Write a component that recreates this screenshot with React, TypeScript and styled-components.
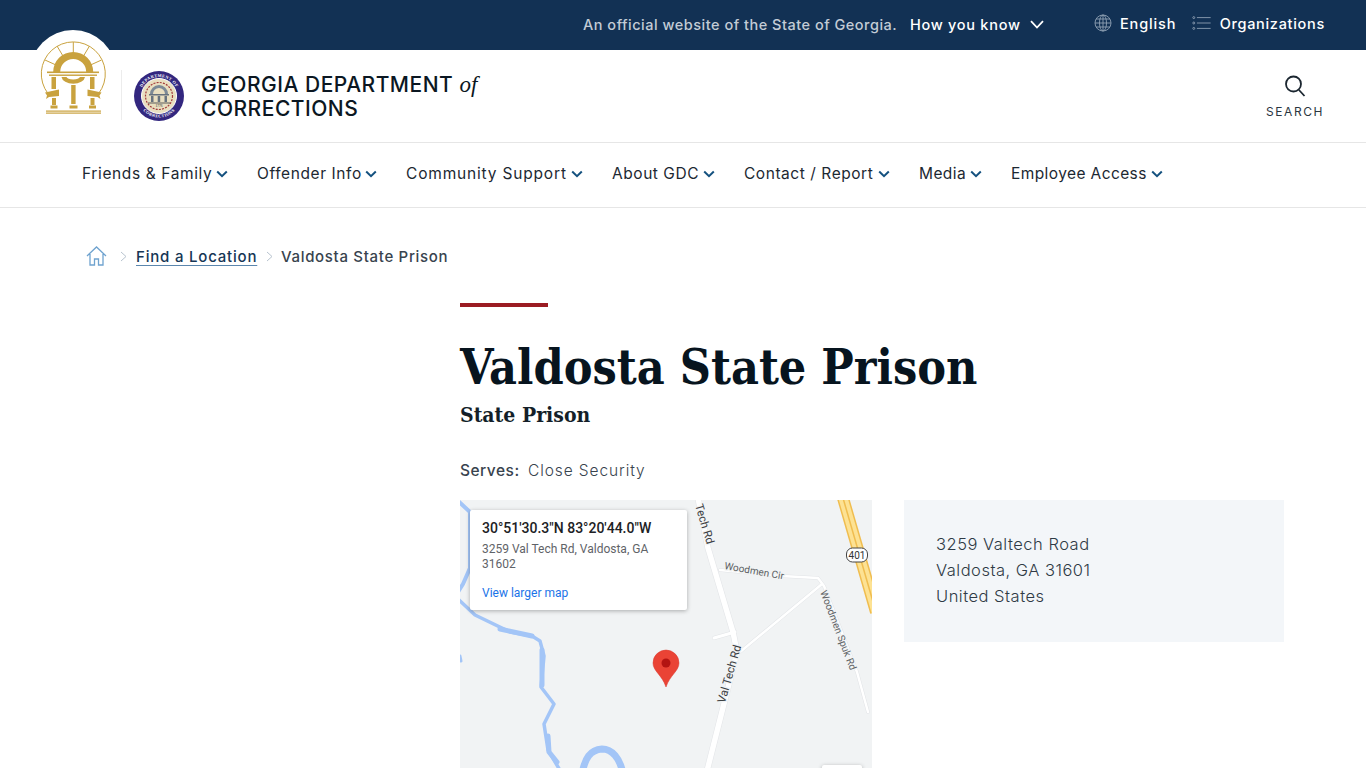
import React from "react";
import styled, { createGlobalStyle } from "styled-components";

const Global = createGlobalStyle`
  html, body { margin: 0; padding: 0; height: 768px; overflow: hidden; background: #fff; }
  body { font-family: Inter, "Open Sans", "Liberation Sans", sans-serif; }
  * { box-sizing: border-box; }
`;

const Page = styled.div`width: 1366px; height: 768px; overflow: hidden; background: #fff;`;

const TopBar = styled.div`
  height: 50px; background: #123154; display: flex; align-items: center; justify-content: flex-end;
  padding: 0 41px 2px 0; font-size: 14.5px; color: #fff;
`;
const Official = styled.span`color: #c3ccd6; font-weight: 500; width: 327px; letter-spacing: .5px; white-space: nowrap;`;
const Know = styled.span`
  display: flex; align-items: center; font-weight: 500; width: 184px; letter-spacing: .72px; gap: 9px;
`;
const TopLink = styled.span<{ $w: number; $ls: number }>`
  display: flex; align-items: center; gap: 8px; font-weight: 500; width: ${p => p.$w}px; letter-spacing: ${p => p.$ls}px;
  position: relative; top: -1px; white-space: nowrap;
`;

const Header = styled.header`
  height: 92px; display: flex; align-items: flex-start; background: #fff; padding: 0 41px 0 30px;
`;
const SealTab = styled.div`
  width: 86px; height: 90px; margin-top: -20px; background: #fff; border-radius: 43px 43px 0 0;
  position: relative; flex: none;
`;
const Divider = styled.div`width: 1px; height: 50px; background: #ececec; margin: 20px 11px 0 5px; flex: none;`;
const DeptSeal = styled.div`margin-top: 20px; width: 52px; height: 52px; flex: none;`;
const Title = styled.div`
  margin: 23px 0 0 16px; font-size: 21px; line-height: 24px; color: #0b1722; font-weight: 500; letter-spacing: .5px; flex: 1;
  white-space: nowrap;
`;
const Of = styled.em`font-family: "Liberation Serif", serif; font-style: italic; font-size: 23px; letter-spacing: 0;`;
const Search = styled.div`
  display: flex; flex-direction: column; align-items: center; width: 60px; margin-top: 25px; gap: 7px;
  font-size: 12px; letter-spacing: 1.6px; color: #2b3640; line-height: 16px;
`;

const Nav = styled.nav`
  height: 66px; border-top: 1px solid #e6e6e6; border-bottom: 1px solid #e6e6e6; display: flex; align-items: center;
  padding: 0 0 3px 82px; gap: 29px;
`;
const NavItem = styled.div`display: flex; align-items: center; gap: 4px;`;
const NavLabel = styled.span<{ $w: number; $ls: number }>`
  width: ${p => p.$w}px; font-size: 15.5px; color: #1c2832; white-space: nowrap; letter-spacing: ${p => p.$ls}px;
`;

const Crumbs = styled.div`
  display: flex; align-items: center; height: 30px; margin: 33px 0 0 86px; font-size: 15px;
`;
const CrumbLink = styled.span`
  color: #163655; font-weight: 500; text-decoration: underline; text-decoration-color: #5b86ad; text-underline-offset: 3px; width: 121px;
  white-space: nowrap; letter-spacing: .8px;
`;
const CrumbText = styled.span`color: #38434e; font-weight: 500; white-space: nowrap; letter-spacing: .68px;`;
const Sep = styled.span<{ $l: number; $r: number }>`
  display: flex; margin: 0 ${p => p.$r}px 0 ${p => p.$l}px;
`;

const Main = styled.main`margin: 0 0 0 460px; width: 824px; padding-top: 32px;`;
const RedBar = styled.div`width: 88px; height: 4px; background: #9b1c23;`;
const H1 = styled.h1`
  margin: 30px 0 0; font: 700 48px/60px "DejaVu Serif Condensed", "DejaVu Serif", serif; color: #07141e; white-space: nowrap;
`;
const H2 = styled.h2`
  margin: 3px 0 0; font: 700 21px/30px "DejaVu Serif Condensed", "DejaVu Serif", serif; color: #141f29;
`;
const Serves = styled.div`margin-top: 29px; font-size: 15.5px; line-height: 24px; color: #38434e; display: flex; letter-spacing: .5px;`;
const ServesLabel = styled.span`font-weight: 500; width: 68px;`;
const ServesValue = styled.span`font-weight: 300; letter-spacing: .9px;`;
const Columns = styled.div`margin-top: 17px; display: flex; gap: 32px; align-items: flex-start;`;
const MapBox = styled.div`width: 412px; height: 300px; position: relative; background: #f1f3f4; flex: none; overflow: hidden; font-family: Roboto, sans-serif;`;
const MapCard = styled.div`
  position: absolute; left: 10px; top: 10px; width: 217px; height: 100px; background: #fff; padding: 9px 12px;
  box-shadow: 0 1px 4px rgba(0,0,0,.3); border-radius: 2px;
`;
const CardTitle = styled.div`font-size: 14px; font-weight: 500; line-height: 19px; color: #202124; white-space: nowrap;`;
const CardAddress = styled.div`font-size: 12px; line-height: 14.5px; color: #5f6368; margin-top: 4px;`;
const CardLink = styled.div`font-size: 12px; line-height: 14px; color: #1a73e8; margin-top: 15px;`;
const ZoomStub = styled.div`
  position: absolute; left: 362px; top: 265px; width: 40px; height: 80px; background: #fff; border-radius: 2px;
  box-shadow: 0 1px 4px rgba(0,0,0,.3);
`;
const AddressBox = styled.address`
  width: 380px; height: 142px; background: #f3f6f9; padding: 31px 32px; font-style: normal; font-size: 16.5px; line-height: 26px;
  font-weight: 300; color: #2f3a45; letter-spacing: .5px;
`;

const Chevron = () => (
  <svg width="12" height="8" viewBox="0 0 12 8" fill="none"><path d="M1.200 1.500 6 6.200l4.800-4.700" stroke="#14517f" strokeWidth="2" /></svg>
);

const navItems: [string, number, number][] = [
  ["Friends & Family", 130, .62], ["Offender Info", 104, .6], ["Community Support", 161, .82], ["About GDC", 87, .55],
  ["Contact / Report", 130, .55], ["Media", 47, .4], ["Employee Access", 136, .4],
];

const GeorgiaSeal = () => (
  <svg width="86" height="90" viewBox="30 30 86 90" style={{ display: "block" }}>
    <g fill="#c9a23e">
      <path d="M48 93.500A32 32 0 1 1 98.600 93.500" fill="none" stroke="#c9a23e" strokeWidth="1" />
      <g stroke="#c9a23e" strokeWidth="1">
        <path d="M45 60 56 65M57 46 63 56M73.300 42 73.300 53M89.500 46 83.500 56M101.500 60 90.500 65" />
      </g>
      <path d="M53.200 72a20 20 0 0 1 40 0h-7a13 13 0 0 0-26 0z" />
      <rect x="47" y="71.500" width="52" height="1.600" />
      <rect x="49" y="74.500" width="48" height="1.400" />
      <path d="M61.500 77h23.500a11.800 7.500 0 0 1-23.500 0zM66.500 77a6.800 3 0 0 0 13.400 0z" fillRule="evenodd" />
      <rect x="51.500" y="77" width="4.500" height="12" />
      <rect x="71.200" y="85" width="4.400" height="19" />
      <rect x="90" y="77" width="4.500" height="12" />
      <path d="M45 92.500 59 89.500 59 96 49 97 46 99 47 95.500z" />
      <path d="M101.500 92.500 87.500 89.500 87.500 96 97.500 97 100.500 99 99.500 95.500z" />
      <rect x="52" y="98" width="4" height="7" />
      <rect x="90.500" y="98" width="4" height="7" />
      <rect x="50.500" y="105.500" width="7" height="3" />
      <rect x="69.500" y="105.500" width="8" height="3" />
      <rect x="89" y="105.500" width="7" height="3" />
      <rect x="46" y="110.500" width="55" height="1.200" />
      <rect x="46" y="112.500" width="55" height="1.200" />
    </g>
  </svg>
);

const DeptSealArt = () => (
  <svg width="52" height="52" viewBox="0 0 52 52" style={{ display: "block" }}>
    <defs>
      <path id="sealTop" d="M7 26a19 19 0 0 1 38 0" />
      <path id="sealBottom" d="M4.500 26a21.500 21.500 0 0 0 43 0" />
    </defs>
    <circle cx="26" cy="26" r="25" fill="#33277f" />
    <circle cx="26" cy="26" r="17.500" fill="#e9dfc0" stroke="#fff" strokeWidth="1" />
    <circle cx="26" cy="26" r="13.500" fill="none" stroke="#a33a3a" strokeWidth="1.200" strokeDasharray="2 1.200" />
    <text fontSize="4.300" fontFamily="Liberation Serif, serif" fill="#fff" fontWeight="700" letterSpacing=".35">
      <textPath href="#sealTop" startOffset="50%" textAnchor="middle">DEPARTMENT OF</textPath>
    </text>
    <text fontSize="4.300" fontFamily="Liberation Serif, serif" fill="#fff" fontWeight="700" letterSpacing=".35">
      <textPath href="#sealBottom" startOffset="50%" textAnchor="middle">CORRECTIONS</textPath>
    </text>
    <path d="M17 24a9 9 0 0 1 18 0h-3a6 6 0 0 0-12 0z" fill="#7d8a96" />
    <path d="M16 24h20v1.500H16zM18 26h2.500v6H18zM24.700 26h2.500v6h-2.500zM31.500 26H34v6h-2.500z" fill="#66727e" />
    <path d="M15 32.500h22v1H15z" fill="#5a5a5a" />
    <text x="26" y="37.400" fontSize="3.500" textAnchor="middle" fontFamily="Liberation Serif, serif" fill="#222">1776</text>
  </svg>
);

const roadCase = "#e2e4e7";

const MapArt = () => (
  <svg width="412" height="300" viewBox="0 0 412 300" style={{ display: "block" }}>
    <g fill="none" strokeLinejoin="round" strokeLinecap="round">
      <path d="M-2 1 10 12 10 68 3 84-2 92" stroke="#a3c5f7" strokeWidth="4" />
      <path d="M-2 99 15 115 50 132 72 136 80 141 84 156 81 187 94 204 84 224 88 250 101 272" stroke="#a3c5f7" strokeWidth="3.500" />
      <path d="M40 129 72 136M82 150 82 185M88 236 89 252 97 262" stroke="#a3c5f7" strokeWidth="5" />
      <path d="M122 274 C125 258 130 250 142 249 C152 249 160 258 163 274" stroke="#a3c5f7" strokeWidth="7" />
      <path d="M0 156 1 161" stroke="#a3c5f7" strokeWidth="3" />
      <path d="M383-2 416 112" stroke="#f0bd4f" strokeWidth="12" strokeLinecap="butt" />
      <path d="M383-2 416 112" stroke="#fde293" strokeWidth="9" strokeLinecap="butt" />
      <path d="M383-2 416 112" stroke="#f0bd4f" strokeWidth="1.500" strokeLinecap="butt" />
      <path d="M362 84 280 152" stroke={roadCase} strokeWidth="3.500" />
      <path d="M260 70 322 76 358 78 364 86 397 172 408 212" stroke={roadCase} strokeWidth="3.500" />
      <path d="M254 138 275 132" stroke={roadCase} strokeWidth="4" />
      <path d="M238-2 248 48 273 132 277 152 246 275" stroke={roadCase} strokeWidth="6.500" strokeLinecap="butt" />
      <path d="M362 84 280 152" stroke="#fff" strokeWidth="2.500" />
      <path d="M260 70 322 76 358 78 364 86 397 172 408 212" stroke="#fff" strokeWidth="2.500" />
      <path d="M254 138 275 132" stroke="#fff" strokeWidth="3" />
      <path d="M238-2 248 48 273 132 277 152 246 275" stroke="#fff" strokeWidth="5.500" strokeLinecap="butt" />
    </g>
    <g fontFamily="Roboto, sans-serif" fontSize="11.500" fill="#5c5f63" stroke="#f1f3f4" strokeWidth="2.500" paintOrder="stroke">
      <text transform="translate(241 25) rotate(73)" textAnchor="middle" fill="#3c4043">Tech Rd</text>
      <text transform="translate(273 175) rotate(-74)" textAnchor="middle" fill="#3c4043">Val Tech Rd</text>
      <text transform="translate(264 69) rotate(10)" fontSize="10">Woodmen Cir</text>
      <text transform="translate(360 92) rotate(69)" fontSize="10">Woodmen Spuk Rd</text>
    </g>
    <rect x="386.500" y="48" width="21" height="14" rx="6" fill="#fff" stroke="#444" strokeWidth="1" />
    <text x="397" y="59" fontFamily="Roboto, sans-serif" fontSize="10" textAnchor="middle" fill="#333">401</text>
    <path d="M206 150a13 13 0 0 0-13 13c0 8 9 12 13 24 4-12 13-16 13-24a13 13 0 0 0-13-13z" fill="#ea4335" stroke="#d8352b" strokeWidth=".5" />
    <circle cx="206" cy="163" r="4.500" fill="#b31412" />
  </svg>
);

const Arrow = () => (
  <svg width="7" height="11" viewBox="0 0 7 11" fill="none"><path d="m1 1 5 4.500L1 10" stroke="#b8c4cf" /></svg>
);

export default function App() {
  return (
    <Page>
      <Global />
      <TopBar>
        <Official>An official website of the State of Georgia.</Official>
        <Know>
          How you know
          <svg width="14" height="9" viewBox="0 0 14 9" fill="none"><path d="M1 1.200 7 7.500l6-6.300" stroke="#fff" strokeWidth="1.800" /></svg>
        </Know>
        <TopLink $w={98} $ls={.85}>
          <svg width="18" height="18" viewBox="0 0 18 18" fill="none" stroke="#8fa0b3" strokeWidth=".9">
            <circle cx="9" cy="9" r="8" />
            <ellipse cx="9" cy="9" rx="3.500" ry="8" />
            <path d="M9 1v16M1 9h16M2 5h14M2 13h14" />
          </svg>
          English
        </TopLink>
        <TopLink $w={133} $ls={.7}>
          <svg width="20" height="14" viewBox="0 0 20 14" fill="none" stroke="#8fa0b3" strokeWidth=".9">
            <path d="M5 1.500h14M5 7h14M5 12.500h14" />
            <circle cx="1.800" cy="1.500" r="1" /><circle cx="1.800" cy="7" r="1" /><circle cx="1.800" cy="12.500" r="1" />
          </svg>
          Organizations
        </TopLink>
      </TopBar>
      <Header>
        <SealTab><GeorgiaSeal /></SealTab>
        <Divider />
        <DeptSeal><DeptSealArt /></DeptSeal>
        <Title>GEORGIA DEPARTMENT <Of>of</Of><br />CORRECTIONS</Title>
        <Search>
          <svg width="22" height="22" viewBox="0 0 22 22" fill="none" stroke="#1b2630" strokeWidth="1.800">
            <circle cx="9.500" cy="9" r="7.500" /><path d="m15 15 5.500 6" />
          </svg>
          SEARCH
        </Search>
      </Header>
      <Nav>
        {navItems.map(([label, w, ls]) => (
          <NavItem key={label}><NavLabel $w={w} $ls={ls}>{label}</NavLabel><Chevron /></NavItem>
        ))}
      </Nav>
      <Crumbs>
        <svg width="21" height="20" viewBox="0 0 21 20" fill="none" stroke="#6fa3cf" strokeWidth="1.300">
          <path d="M1 10 10.500 1 20 10M4 8v11h4.500v-6h4v6H17V8" />
        </svg>
        <Sep $l={13} $r={9}><Arrow /></Sep>
        <CrumbLink>Find a Location</CrumbLink>
        <Sep $l={9} $r={8}><Arrow /></Sep>
        <CrumbText>Valdosta State Prison</CrumbText>
      </Crumbs>
      <Main>
        <RedBar />
        <H1>Valdosta State Prison</H1>
        <H2>State Prison</H2>
        <Serves><ServesLabel>Serves:</ServesLabel><ServesValue>Close Security</ServesValue></Serves>
        <Columns>
          <MapBox>
            <MapArt />
            <MapCard>
              <CardTitle>30°51'30.3"N 83°20'44.0"W</CardTitle>
              <CardAddress>3259 Val Tech Rd, Valdosta, GA 31602</CardAddress>
              <CardLink>View larger map</CardLink>
            </MapCard>
            <ZoomStub />
          </MapBox>
          <AddressBox>3259 Valtech Road<br />Valdosta, GA 31601<br />United States</AddressBox>
        </Columns>
      </Main>
    </Page>
  );
}
